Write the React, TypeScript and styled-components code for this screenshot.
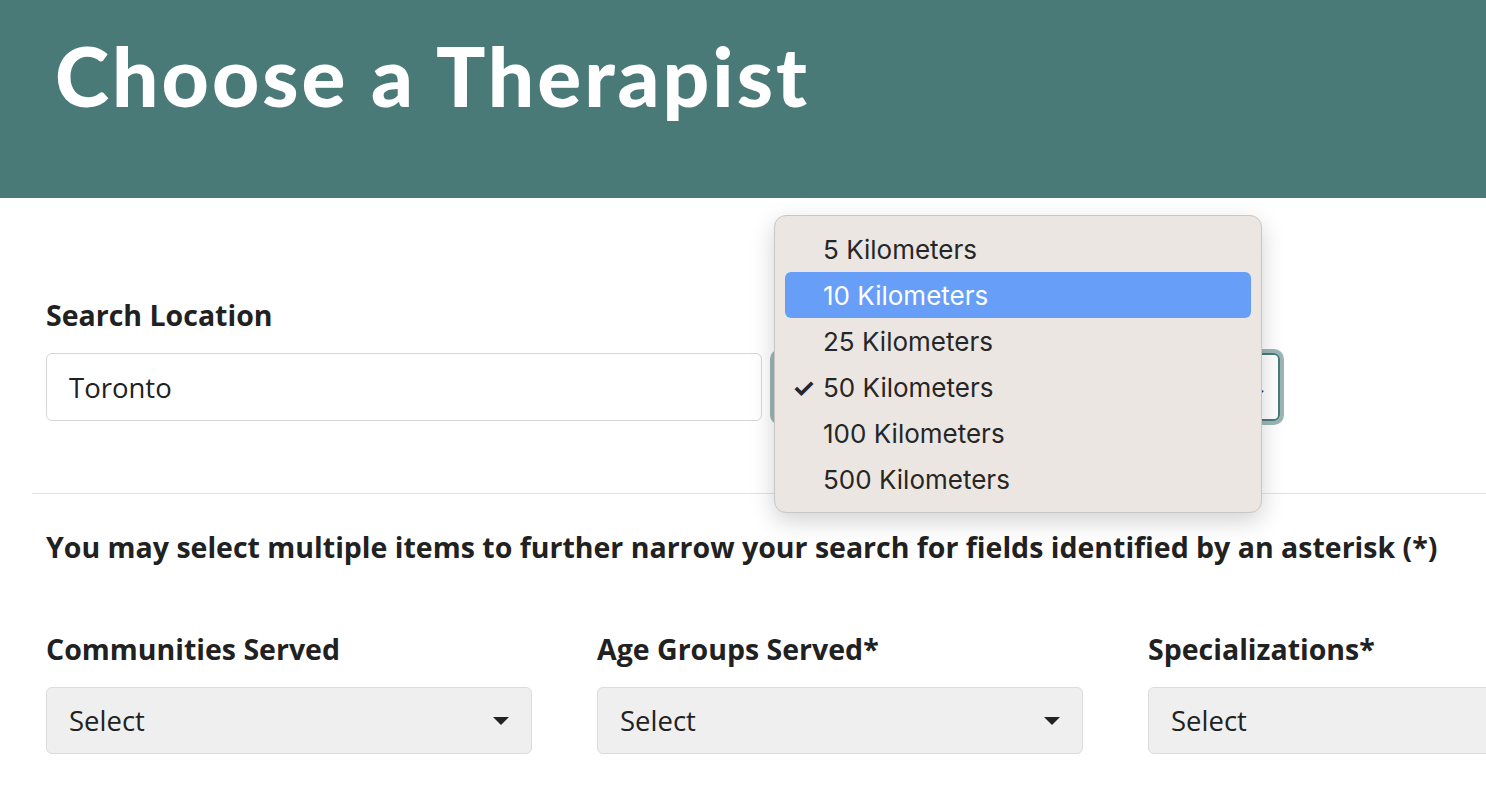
import React from "react";
import styled, { createGlobalStyle } from "styled-components";

const Global = createGlobalStyle`
  html, body { margin: 0; padding: 0; background: #fff; overflow: hidden; }
  body { font-family: "Open Sans", sans-serif; color: #212121; width: 1486px; height: 794px; }
`;

const Header = styled.header`
  height: 198px;
  background: #4a7a77;
  box-sizing: border-box;
  padding: 34px 0 0 55px;
`;
const Title = styled.h1`
  margin: 0;
  font-family: "Lato", sans-serif;
  font-weight: 900;
  font-size: 82px;
  letter-spacing: 3px;
  color: #fff;
  line-height: 1;
`;
const Main = styled.main`
  padding: 0 0 0 46px;
`;
const Row = styled.div`
  display: flex;
  gap: 12px;
  padding-top: 98px;
  padding-bottom: 72px;
  align-items: flex-end;
  position: relative;
`;
const Field = styled.div<{ $w: number }>`
  width: ${(p) => p.$w}px;
  flex-shrink: 0;
  display: flex;
  flex-direction: column;
`;
const Label = styled.label`
  font-weight: 700;
  font-size: 28.5px;
  line-height: 38px;
  margin-bottom: 19px;
  white-space: nowrap;
`;
const Input = styled.div`
  height: 68px;
  box-sizing: border-box;
  border: 1px solid #d6d6d6;
  border-radius: 6px;
  padding: 0 22px;
  display: flex;
  align-items: center;
  font-size: 27.5px;
`;
const FocusSelect = styled.div`
  height: 68px;
  box-sizing: border-box;
  border: 2px solid #4a7a77;
  border-radius: 6px;
  box-shadow: 0 0 0 4px rgba(74, 122, 119, 0.55);
  display: flex;
  align-items: center;
  justify-content: flex-end;
  padding-right: 10px;
  font-size: 20px;
  color: #444;
`;
const Divider = styled.hr`
  border: 0;
  border-top: 1px solid #e3e3e3;
  margin: 0 0 0 -14px;
`;
const Note = styled.p`
  font-weight: 700;
  font-size: 28.5px;
  margin: 34px 0 0;
  line-height: 38px;
  white-space: nowrap;
`;
const Filters = styled.div`
  display: flex;
  gap: 65px;
  padding-top: 64px;
`;
const GreySelect = styled.div`
  height: 67px;
  box-sizing: border-box;
  background: #efefef;
  border: 1px solid #dcdcdc;
  border-radius: 6px;
  padding: 0 22px;
  display: flex;
  align-items: center;
  justify-content: space-between;
  font-size: 27.5px;
`;
const Caret = styled.span`
  width: 0;
  height: 0;
  border-left: 8px solid transparent;
  border-right: 8px solid transparent;
  border-top: 8px solid #222;
`;
const Menu = styled.ul`
  position: absolute;
  left: 728px;
  top: 17px;
  width: 488px;
  margin: 0;
  padding: 10px;
  box-sizing: border-box;
  list-style: none;
  background: #ebe6e2;
  border: 1px solid #c9c5c2;
  border-radius: 12px;
  box-shadow: 0 8px 24px rgba(0, 0, 0, 0.18);
  font-family: "Inter", sans-serif;
`;
const Item = styled.li<{ $active?: boolean }>`
  height: 46px;
  border-radius: 6px;
  display: flex;
  align-items: center;
  padding-left: 38px;
  position: relative;
  font-size: 26px;
  color: ${(p) => (p.$active ? "#fff" : "#262626")};
  background: ${(p) => (p.$active ? "#679ef8" : "transparent")};
`;
const Check = styled.span`
  position: absolute;
  left: 7px;
  font-size: 26px;
  font-weight: 700;
`;

const items = ["5", "10", "25", "50", "100", "500"];

export default function App() {
  return (
    <>
      <Global />
      <Header>
        <Title>Choose a Therapist</Title>
      </Header>
      <Main>
        <Row>
          <Field $w={716}>
            <Label>Search Location</Label>
            <Input>Toronto</Input>
          </Field>
          <Field $w={506}>
            <FocusSelect>⌄</FocusSelect>
          </Field>
          <Menu>
            {items.map((k) => (
              <Item key={k} $active={k === "10"}>
                {k === "50" && <Check>✓</Check>}
                {k} Kilometers
              </Item>
            ))}
          </Menu>
        </Row>
        <Divider />
        <Note>You may select multiple items to further narrow your search for fields identified by an asterisk (*)</Note>
        <Filters>
          {["Communities Served", "Age Groups Served*", "Specializations*"].map((l) => (
            <Field $w={486} key={l}>
              <Label>{l}</Label>
              <GreySelect>
                Select
                <Caret />
              </GreySelect>
            </Field>
          ))}
        </Filters>
      </Main>
    </>
  );
}
